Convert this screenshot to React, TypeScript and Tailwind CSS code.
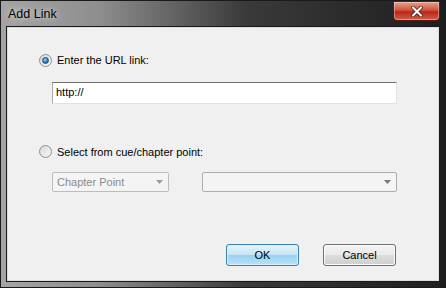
import React from "react";

function Radio({ checked }: { checked?: boolean }) {
  return (
    <span className="relative inline-flex h-[13px] w-[13px] shrink-0 items-center justify-center rounded-full border border-[#8e8f8f] bg-gradient-to-br from-[#d8d8d8] to-[#f8f8f8]">
      {checked && (
        <span className="h-[7px] w-[7px] rounded-full border border-[#1b4f7d] bg-[radial-gradient(circle_at_40%_35%,#9fd2f5,#2a7fc0_55%,#13416b)]" />
      )}
    </span>
  );
}

function Arrow({ color = "#9a9a9a" }: { color?: string }) {
  return (
    <svg width="7" height="4" viewBox="0 0 7 4">
      <path d="M0 0 H7 L3.5 4 Z" fill={color} />
    </svg>
  );
}

export default function App() {
  return (
    <div
      className="relative flex h-[288px] w-[446px] flex-col border border-[#1a1a1a] bg-[linear-gradient(90deg,#a4a4a4_0%,#8e8e8e_22%,#3a3a3a_55%,#1e1e1e_100%)]"
      style={{ fontFamily: '"Liberation Sans", Arial, sans-serif' }}
    >
      <div className="flex h-[26px] shrink-0 items-center pl-[7px] text-[12.5px] text-black">
        <span className="[text-shadow:0_0_6px_rgba(255,255,255,0.9)]">Add Link</span>
      </div>
      <div className="absolute right-[5px] top-0 flex h-[20px] w-[47px] items-center justify-center rounded-b-[4px] border border-[#5a1a12] bg-[linear-gradient(180deg,#e8a08f_0%,#d0553d_45%,#b8261a_55%,#d06048_100%)] shadow-[inset_0_0_0_1px_rgba(255,255,255,0.35)]">
        <svg width="12" height="11" viewBox="0 0 12 11">
          <path d="M2 1.5 L10 9.5 M10 1.5 L2 9.5" stroke="#3a0a05" strokeWidth="3.4" strokeLinecap="round" />
          <path d="M2 1.5 L10 9.5 M10 1.5 L2 9.5" stroke="#ffffff" strokeWidth="2.2" strokeLinecap="round" />
        </svg>
      </div>
      <div className="mx-[6px] mb-[6px] flex flex-1 flex-col border border-[#dcdcdc] bg-[#f0f0f0] shadow-[0_0_0_1px_#1a1a1a] text-[11px] text-black">
        <div className="flex items-center gap-[5px] pl-[31px] pt-[24px]">
          <Radio checked />
          <span>Enter the URL link:</span>
        </div>
        <div className="ml-[44px] mt-[13px] flex h-[22px] w-[345px] items-center border border-[#ababab] border-t-[#707070] border-r-[#e3e3e3] border-b-[#e3e3e3] bg-white pl-[3px]">
          http://
        </div>
        <div className="flex items-center gap-[5px] pl-[31px] pt-[40px]">
          <Radio />
          <span>Select from cue/chapter point:</span>
        </div>
        <div className="ml-[44px] mt-[12px] flex gap-[33px]">
          <div className="flex h-[20px] w-[117px] items-center justify-between rounded-[2px] border border-[#bcbcbc] bg-[#f4f4f4] pl-[4px] pr-[5px] text-[#8a8a8a]">
            <span>Chapter Point</span>
            <Arrow />
          </div>
          <div className="flex h-[20px] w-[195px] items-center justify-end rounded-[2px] border border-[#adadad] bg-[#f4f4f4] pr-[5px]">
            <Arrow color="#7a7a7a" />
          </div>
        </div>
        <div className="mt-auto mb-[14px] flex justify-end gap-[24px] pr-[42px]">
          <button className="flex h-[22px] w-[73px] items-center justify-center rounded-[3px] border border-[#3c7fb1] bg-[linear-gradient(180deg,#e5f4fc_0%,#c4e5f6_50%,#98d1ef_51%,#b7e3f8_100%)] shadow-[inset_0_0_0_1px_#d8f0fc] text-[11px]">
            OK
          </button>
          <button className="flex h-[22px] w-[73px] items-center justify-center rounded-[3px] border border-[#707070] bg-[linear-gradient(180deg,#f2f2f2_0%,#ebebeb_50%,#dddddd_51%,#cfcfcf_100%)] shadow-[inset_0_0_0_1px_#fbfbfb] text-[11px]">
            Cancel
          </button>
        </div>
      </div>
    </div>
  );
}
